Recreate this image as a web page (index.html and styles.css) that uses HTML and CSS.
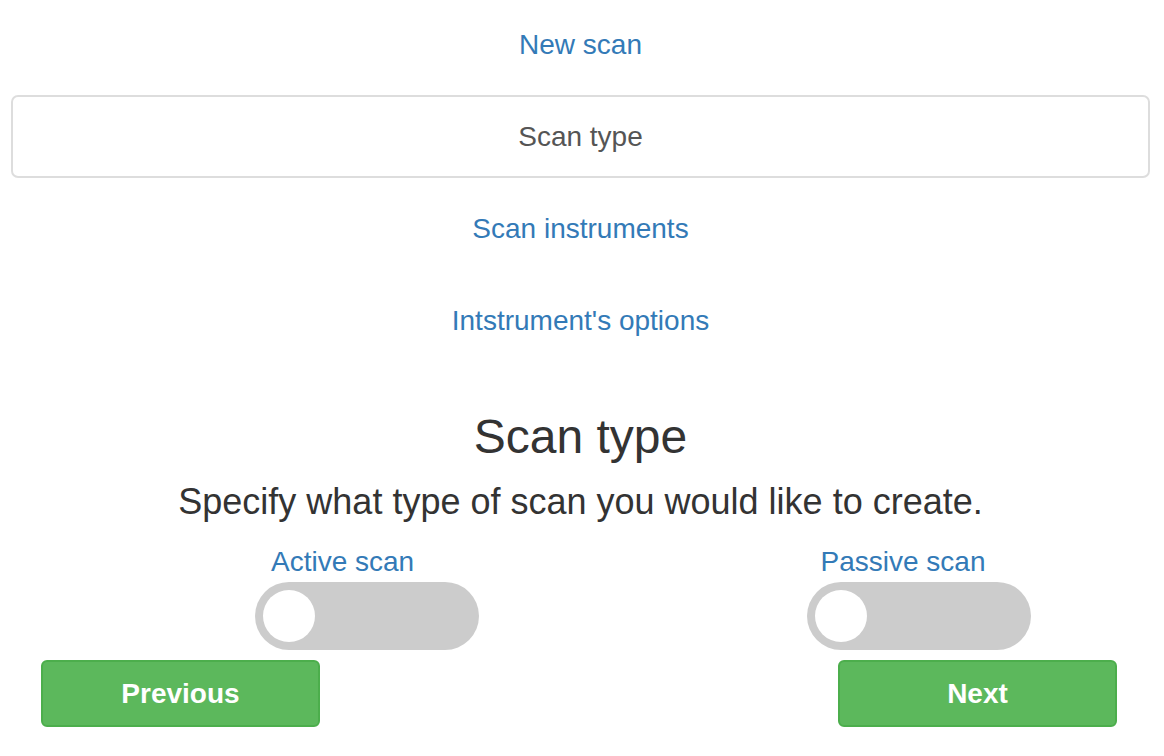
FILE: index.html
```html
<!DOCTYPE html>
<html>
<head>
<meta charset="utf-8">
<link rel="stylesheet" href="styles.css">
</head>
<body>
<div class="page">
  <ul class="steps">
    <li class="step"><a href="#">New scan</a></li>
    <li class="step active"><a href="#">Scan type</a></li>
    <li class="step"><a href="#">Scan instruments</a></li>
    <li class="step"><a href="#">Intstrument's options</a></li>
  </ul>
  <h3 class="title">Scan type</h3>
  <p class="lead">Specify what type of scan you would like to create.</p>
  <div class="options">
    <div class="option option-left">
      <a class="opt-label" href="#">Active scan</a>
      <span class="switch"><span class="knob"></span></span>
    </div>
    <div class="option option-right">
      <a class="opt-label" href="#">Passive scan</a>
      <span class="switch"><span class="knob"></span></span>
    </div>
  </div>
  <div class="actions">
    <button class="btn">Previous</button>
    <button class="btn">Next</button>
  </div>
</div>
</body>
</html>
```

FILE: styles.css
```css
html, body {
  margin: 0;
  padding: 0;
  background: #fff;
}
body {
  font-family: "Liberation Sans", Arial, sans-serif;
  font-size: 28px;
  color: #333;
}
.page {
  padding: 3px 14px 0 11px;
}
.steps {
  list-style: none;
  margin: 0;
  padding: 0;
  display: flex;
  flex-direction: column;
  gap: 9px;
}
.step a {
  display: block;
  text-align: center;
  line-height: 41px;
  padding: 19px 0;
  border: 2px solid transparent;
  border-radius: 7px;
  color: #337ab7;
  text-decoration: none;
}
.step.active a {
  border-color: #dddddd;
  color: #555;
}
.title {
  margin: 48px 0 0;
  font-size: 48px;
  font-weight: 400;
  line-height: 53px;
  text-align: center;
  color: #333;
}
.lead {
  margin: 19px 0 0;
  font-size: 36px;
  line-height: 40px;
  text-align: center;
  color: #333;
}
.options {
  margin-top: 20px;
  display: grid;
  grid-template-columns: 1fr 1fr;
}
.option {
  display: flex;
  flex-direction: column;
  align-items: flex-start;
}
.option-left {
  padding-left: 244px;
}
.option-right {
  padding-left: 226px;
}
.opt-label {
  line-height: 40px;
  color: #337ab7;
  text-decoration: none;
}
.option-left .opt-label {
  margin-left: 16px;
}
.option-right .opt-label {
  margin-left: 14px;
}
.switch {
  display: flex;
  align-items: center;
  width: 224px;
  height: 68px;
  border-radius: 34px;
  background: #cccccc;
  padding-left: 8px;
  box-sizing: border-box;
}
.knob {
  width: 52px;
  height: 52px;
  border-radius: 50%;
  background: #fff;
}
.actions {
  margin-top: 10px;
  display: flex;
  justify-content: space-between;
  padding: 0 33px 0 30px;
}
.btn {
  width: 279px;
  height: 67px;
  background: #5cb85c;
  border: 2px solid #4cae4c;
  border-radius: 6px;
  color: #fff;
  font-family: "Liberation Sans", Arial, sans-serif;
  font-size: 28px;
  font-weight: 700;
  padding: 0;
}
```
